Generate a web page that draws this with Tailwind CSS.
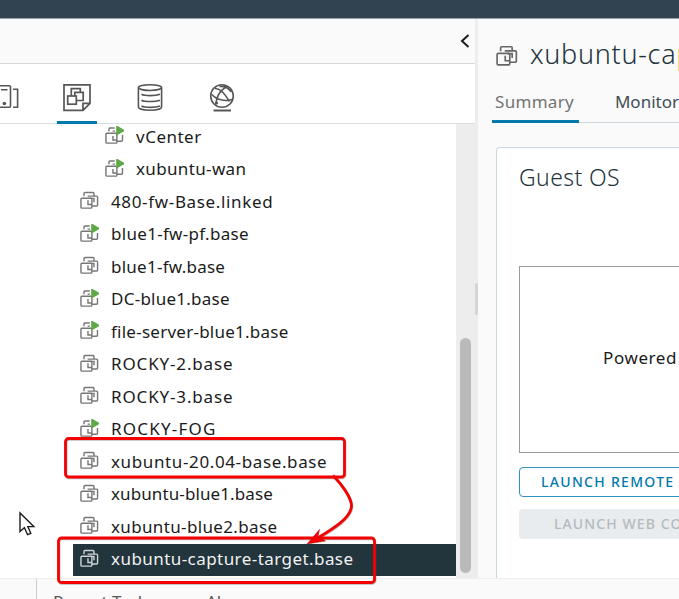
<!DOCTYPE html>
<html lang="en">
<head>
<meta charset="utf-8">
<title>vSphere Client</title>
<script src="https://cdn.jsdelivr.net/npm/@tailwindcss/browser@4"></script>
</head>
<body class="relative flex h-[599px] w-[679px] flex-col overflow-hidden bg-[#fafafa] font-['Noto_Sans',sans-serif] text-[#1b1b1b]">
<svg class="hidden">
  <symbol id="vm" viewBox="0 0 20 20" fill="none" stroke="currentColor" stroke-width="1.5">
    <rect x="1" y="7.600" width="11.500" height="10.400" rx="1"/>
    <path d="M4.200 5.600V2.600a1 1 0 0 1 1-1h8.500a1 1 0 0 1 1 1v2.600"/>
    <path d="M8 5.400h9.500a1 1 0 0 1 1 1v8.300a1 1 0 0 1-1 1h-5M8.400 9.800v4.500h4.100M10.500 7.800h4.200v4"/>
  </symbol>
  <symbol id="vmon" viewBox="0 0 20 20" fill="none" stroke="currentColor" stroke-width="1.5">
    <rect x="1" y="7.600" width="11.500" height="10.400" rx="1"/>
    <path d="M4.200 5.600V3.100a1 1 0 0 1 1-1h5M8 5.400h2.500M12.500 16h4.900a1 1 0 0 0 1-1V9.500M8.400 10.500v4.200h4.100"/>
    <path d="M11.800 -.8v11L21.500 4.700z" fill="#5fa846" stroke="none"/>
  </symbol>
</svg>

<header class="h-[19px] shrink-0 border-b border-[#93a0a8] bg-[#314351]"></header>

<main class="flex h-[560px] shrink-0 border-b border-[#eeeeee]">
  <aside class="flex w-[475px] shrink-0 flex-col bg-white">
    <div class="flex h-[45px] shrink-0 items-center justify-end border-b border-[#d5dbdb] bg-[#fafafa] pr-[5px]">
      <svg class="h-4 w-[10px]" viewBox="0 0 10 16" fill="none" stroke="#1b1b1b" stroke-width="2"><path d="M8.500 2 2 8l6.500 6"/></svg>
    </div>
    <nav class="flex h-[60px] shrink-0 border-b border-[#d8e0e1] text-[#565656]">
      <div class="flex w-[57px] items-center pt-[7px]">
        <svg class="h-[28px] w-[20px]" viewBox="0 0 20 28" fill="none" stroke="currentColor" stroke-width="1.6"><path d="M0 2.700h9.500a1 1 0 0 1 1 1v19.500a1 1 0 0 1-1 1H0M1 6.800h6.500M13 6.300h4.600v18H13"/><circle cx="4.400" cy="20.500" r="1.800" fill="currentColor" stroke="none"/></svg>
      </div>
      <div class="-mb-px flex w-10 justify-center border-b-[3px] border-[#0079ad] pt-[19px]">
        <svg class="h-[29px] w-[28px]" viewBox="0 0 28 29" fill="none" stroke="currentColor" stroke-width="1.7"><path d="M1 1.800h26v18.500l-7 7H1zM20 27.300v-7h7"/><rect x="4.700" y="13" width="8.600" height="8.200"/><path d="M8.300 13V5.600h9v3.500M13.300 17.500h6.900V9.300h-8.400V13"/></svg>
      </div>
      <div class="flex w-[105px] justify-center pt-[19px]">
        <svg class="h-[29px] w-[26px]" viewBox="0 0 26 29" fill="none" stroke="currentColor" stroke-width="1.6"><ellipse cx="13" cy="4.600" rx="11.600" ry="2.900"/><path d="M1.400 4.600v19.500c0 1.700 5 3.200 11.600 3.200s11.600-1.500 11.600-3.200V4.600M4.500 11.300c3 1.800 14 1.800 18.500 0M4.500 17.200c3 1.800 14 1.800 18.500 0M4.500 23c3 1.800 14 1.800 18.500 0"/></svg>
      </div>
      <div class="flex w-10 justify-center pt-[19px]">
        <svg class="h-[29px] w-[26px]" viewBox="0 0 26 29" fill="none" stroke="currentColor" stroke-width="1.6"><circle cx="13" cy="13" r="11.300"/><path d="M5.500 5.300c3 .3 6 1.700 8 3.700 3 3 5 6.500 7 9.500M18 3.500c-2.500 1.500-6 4-7.500 6.500-2 3-3 7-3.700 11M3 11.500c4 5 13 7.500 20 5M10.500 3.500c4-.5 9 1.500 12 5.500"/><path d="M4.500 27.500h17.500" stroke-width="2"/><circle cx="7.500" cy="20" r="1.600" fill="currentColor" stroke="none"/></svg>
      </div>
    </nav>
    <div class="flex min-h-0 flex-1 overflow-hidden">
      <ul id="tree" class="-mt-[3.500px] flex w-[456px] flex-col text-[17px] leading-[32.500px] whitespace-nowrap"></ul>
      <div class="flex flex-1 flex-col items-start bg-[#ededed] pl-[4px]">
        <div class="mt-[214px] h-[235px] w-[11px] rounded-full bg-[#bababa]"></div>
      </div>
    </div>
  </aside>

  <div class="flex w-[3px] shrink-0 items-start bg-[#ededed]">
    <div class="mt-[264px] h-8 w-[3px] rounded-sm bg-[#d5d5d5]"></div>
  </div>

  <section class="flex w-[201px] shrink-0 flex-col overflow-hidden whitespace-nowrap">
    <div class="flex h-[70px] shrink-0 items-center pl-[18px] text-[#666666]">
      <svg class="mt-[3px] h-[22px] w-[22px] shrink-0"><use href="#vm"/></svg>
      <h1 class="ml-[12px] text-[27px] font-light tracking-[0.7px] text-[#24343d]">xubuntu-ca<span class="text-[#f5b95f]">p</span></h1>
    </div>
    <div class="ml-[14px] flex h-[34px] shrink-0 border-b border-[#ccd6dc] text-[17px]">
      <div class="-mb-px w-[87px] border-b-[3px] border-[#0079ad] pl-[3px] leading-[26px] tracking-[0.3px] text-[#737373]">Summary</div>
      <div class="pl-[36px] leading-[26px] text-[#3f4d55]">Monitor</div>
    </div>
    <div class="mt-[24px] ml-[18px] flex w-[220px] flex-1 flex-col rounded-tl border-t border-l border-[#ccd8df] bg-white pl-[22px]">
      <h2 class="h-[118px] pt-[13px] text-[23px] leading-[32px] font-light tracking-[0.4px] text-[#24343d]">Guest OS</h2>
      <div class="flex h-[187px] shrink-0 items-center border border-[#9a9a9a] pb-[3px] pl-[83px] text-[17px] tracking-[0.6px]">Powered</div>
      <div class="mt-[14px] h-[30px] shrink-0 rounded border border-[#2f92bd] pl-[21px] text-[14px] leading-[28px] font-medium tracking-[1.3px] text-[#0079ad]">LAUNCH REMOTE</div>
      <div class="mt-[12px] h-[30px] shrink-0 rounded bg-[#e8ecee] pl-[35px] text-[14px] leading-[29px] font-medium tracking-[1.1px] text-[#b5babd]">LAUNCH WEB CO</div>
    </div>
  </section>
</main>

<footer class="flex h-5 shrink-0 overflow-hidden text-[17px] leading-[22px] whitespace-nowrap text-[#565656]">
  <div class="w-[37px] border-r border-[#cccccc]"></div>
  <div class="w-[169px] pt-[12px] pl-4">Recent Tasks</div>
  <div class="pt-[12px]">Alarms</div>
</footer>

<svg class="pointer-events-none absolute inset-0 h-[599px] w-[679px]" viewBox="0 0 679 599" fill="none">
  <g stroke="#555" stroke-opacity=".4" stroke-width="2.800" transform="translate(.5 .8)">
    <rect x="65.500" y="438.500" width="279" height="38.500" rx="3"/><rect x="58.500" y="538" width="316" height="44.500" rx="3"/>
    <path d="M333 475.500c8 8 18 21 18.500 30 0 12-18 23-33 32"/>
  </g>
  <g stroke="#f40000" stroke-width="2.800">
    <rect x="65.500" y="438.500" width="279" height="38.500" rx="3"/><rect x="58.500" y="538" width="316" height="44.500" rx="3"/>
    <path d="M333 475.500c8 8 18 21 18.500 30 0 12-18 23-33 32"/>
  </g>
  <path d="M307 544l12.500-14.500-1.500 7 7.500 4.500z" fill="#f40000" stroke="#a01010" stroke-width=".5"/>
  <path d="M20 513v18.500l4.400-3.800 3.200 7 3.200-1.400-3-6.700h6z" fill="#fff" stroke="#1b1b1b" stroke-width="1.400"/>
</svg>

<script>
const rows = [
  ["vCenter", 1, 1, "tracking-[0.5px]"], ["xubuntu-wan", 1, 1, "tracking-[0.35px]"],
  ["480-fw-Base.linked", 0, 0, "tracking-[0.65px]"], ["blue1-fw-pf.base", 1, 0, "tracking-[0.3px]"],
  ["blue1-fw.base", 0, 0, "tracking-[0.25px]"], ["DC-blue1.base", 1, 0, "tracking-[0.25px]"],
  ["file-server-blue1.base", 1, 0, "tracking-[0.25px]"], ["ROCKY-2.base", 0, 0, "tracking-[0.85px]"],
  ["ROCKY-3.base", 0, 0, "tracking-[0.85px]"], ["ROCKY-FOG", 1, 0, "tracking-[1.2px]"],
  ["xubuntu-20.04-base.base", 0, 0, "tracking-[0.62px]"], ["xubuntu-blue1.base", 0, 0, "tracking-[0.1px]"],
  ["xubuntu-blue2.base", 0, 0, "tracking-[0.35px]"], ["xubuntu-capture-target.base", 0, 0, "tracking-[0.44px]", 1]
];
document.getElementById("tree").innerHTML = rows.map(([name, on, deep, tracking, sel]) =>
  `<li class="flex shrink-0 items-center ${deep ? "pl-[105px]" : sel ? "pl-[7px]" : "pl-[80px]"} ${sel ? "mt-px ml-[73px] h-[32px] bg-[#22343c] pb-[2px] text-[#f2f2f2]" : "h-[32.500px]"}">
    <svg class="-mt-[2px] h-[19px] w-[19px] shrink-0 overflow-visible ${sel ? "text-[#cfd3d5]" : "text-[#777777]"}"><use href="#${on ? "vmon" : "vm"}"/></svg>
    <span class="ml-[12px] ${tracking}">${name}</span></li>`).join("");
</script>
</body>
</html>
